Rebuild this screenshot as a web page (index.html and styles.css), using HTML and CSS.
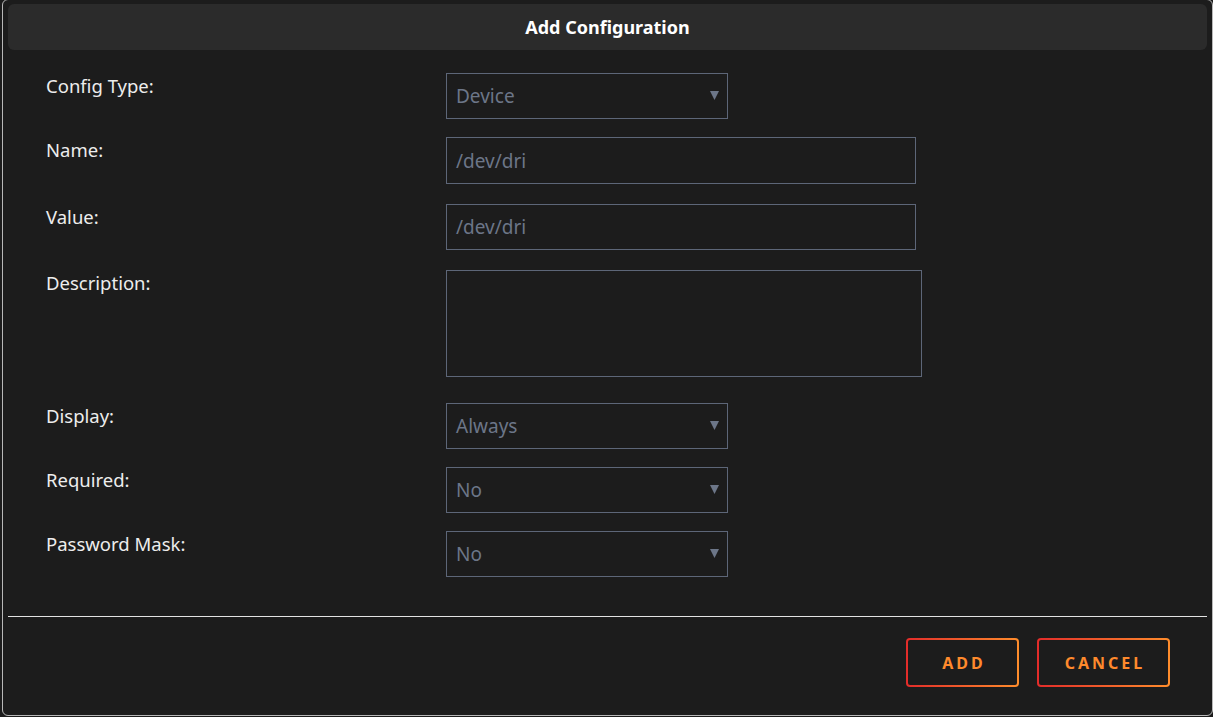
FILE: index.html
```html
<!DOCTYPE html>
<html>
<head>
<meta charset="utf-8">
<link rel="stylesheet" href="styles.css">
</head>
<body>
<div class="dialog">
  <div class="header">Add Configuration</div>
  <form class="form">
    <label class="label">Config Type:</label>
    <div class="select w-sel"><span>Device</span><svg class="arrow" width="9" height="9" viewBox="0 0 9 9"><polygon points="0,0 9,0 4.5,9" fill="#6c7688"/></svg></div>

    <label class="label r2">Name:</label>
    <div class="input w-in r2">/dev/dri</div>

    <label class="label r3">Value:</label>
    <div class="input w-in r3">/dev/dri</div>

    <label class="label r3">Description:</label>
    <div class="textarea r3"></div>

    <label class="label r5">Display:</label>
    <div class="select w-sel r5"><span>Always</span><svg class="arrow" width="9" height="9" viewBox="0 0 9 9"><polygon points="0,0 9,0 4.5,9" fill="#6c7688"/></svg></div>

    <label class="label">Required:</label>
    <div class="select w-sel"><span>No</span><svg class="arrow" width="9" height="9" viewBox="0 0 9 9"><polygon points="0,0 9,0 4.5,9" fill="#6c7688"/></svg></div>

    <label class="label">Password Mask:</label>
    <div class="select w-sel"><span>No</span><svg class="arrow" width="9" height="9" viewBox="0 0 9 9"><polygon points="0,0 9,0 4.5,9" fill="#6c7688"/></svg></div>
  </form>
  <div class="divider"></div>
  <div class="actions">
    <button class="btn btn-add" type="button">ADD</button>
    <button class="btn btn-cancel" type="button">CANCEL</button>
  </div>
</div>
</body>
</html>
```
FILE: styles.css
```css
html, body {
  margin: 0;
  padding: 0;
  background: #1c1c1c;
  overflow: hidden;
}
body {
  font-family: "Noto Sans", "Open Sans", sans-serif;
  color: #ececec;
}
.dialog {
  box-sizing: border-box;
  margin: -1px 0 0 2px;
  width: 1211px;
  height: 717px;
  border: 1px solid #b8b8b8;
  border-radius: 6px;
  padding: 4px 5px 0 5px;
  background: #1c1c1c;
}
.header {
  height: 46px;
  background: #2b2b2b;
  border-radius: 6px;
  display: flex;
  align-items: center;
  justify-content: center;
  font-weight: 700;
  font-size: 18px;
  color: #ffffff;
}
.form {
  display: grid;
  grid-template-columns: 400px auto;
  justify-content: start;
  align-items: start;
  row-gap: 18px;
  padding: 23px 0 0 38px;
}
.label {
  font-size: 18.5px;
  line-height: 24px;
  padding-top: 1px;
  color: #ededed;
}
.r2 { margin-top: 0; }
.r3 { margin-top: 2px; }
.r5 { margin-top: 8px; }
.select, .input, .textarea {
  box-sizing: border-box;
  border: 1px solid #5d6678;
  color: #6c7688;
  font-size: 19px;
  display: flex;
  align-items: center;
  padding: 0 9px;
}
.select { height: 46px; justify-content: space-between; }
.w-sel { width: 282px; }
.input { height: 47px; }
.input.r3 { height: 46px; }
.w-in { width: 470px; }
.textarea { width: 476px; height: 107px; }
.arrow {
  display: block;
  margin-right: -1px;
  margin-top: -2px;
}
.divider {
  height: 1px;
  background: #e2e2e2;
  margin-top: 39px;
}
.actions {
  display: flex;
  justify-content: flex-end;
  gap: 18px;
  padding: 21px 37px 0 0;
}
.btn {
  box-sizing: border-box;
  height: 49px;
  border: 2px solid transparent;
  border-radius: 4px;
  background:
    linear-gradient(#1c1c1c, #1c1c1c) padding-box,
    linear-gradient(90deg, #e32c2a, #ff8d2c) border-box;
  color: #ff8a2c;
  font-family: "Noto Sans", "Open Sans", sans-serif;
  font-weight: 700;
  font-size: 16px;
  letter-spacing: 3px;
  padding: 0 0 0 3px;
  cursor: pointer;
}
.btn-add { width: 113px; }
.btn-cancel { width: 133px; }
```
